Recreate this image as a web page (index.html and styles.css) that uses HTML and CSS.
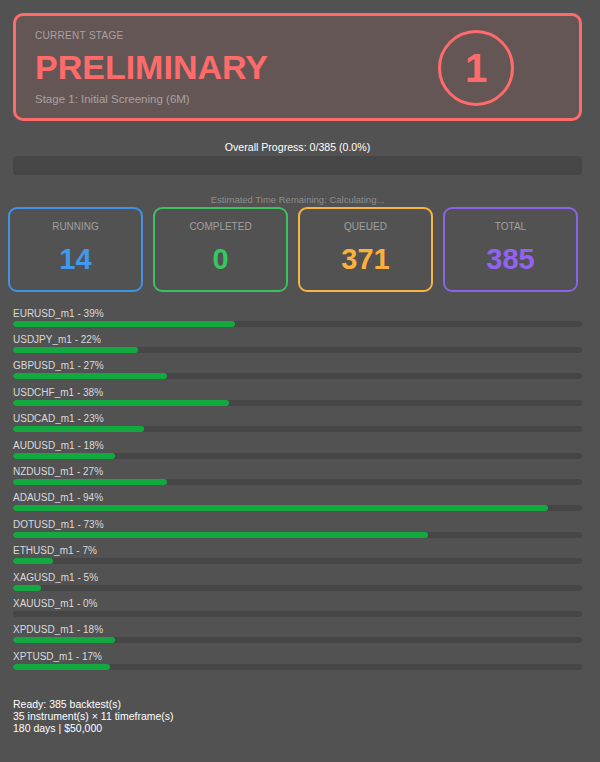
FILE: index.html
```html
<!DOCTYPE html>
<html>
<head>
<meta charset="utf-8">
<link rel="stylesheet" href="styles.css">
</head>
<body>
<div class="page">
  <div class="stage-card">
    <div class="stage-info">
      <div class="stage-label">CURRENT STAGE</div>
      <div class="stage-name">PRELIMINARY</div>
      <div class="stage-desc">Stage 1: Initial Screening (6M)</div>
    </div>
    <div class="stage-circle">1</div>
  </div>

  <div class="overall-text">Overall Progress: 0/385 (0.0%)</div>
  <div class="overall-bar"></div>
  <div class="eta">Estimated Time Remaining: Calculating...</div>

  <div class="stats">
    <div class="stat running"><div class="stat-label">RUNNING</div><div class="stat-value">14</div></div>
    <div class="stat completed"><div class="stat-label">COMPLETED</div><div class="stat-value">0</div></div>
    <div class="stat queued"><div class="stat-label">QUEUED</div><div class="stat-value">371</div></div>
    <div class="stat total"><div class="stat-label">TOTAL</div><div class="stat-value">385</div></div>
  </div>

  <div class="jobs">
    <div class="job"><div class="job-label">EURUSD_m1 - 39%</div><div class="track"><div class="fill" style="width:39%"></div></div></div>
    <div class="job"><div class="job-label">USDJPY_m1 - 22%</div><div class="track"><div class="fill" style="width:22%"></div></div></div>
    <div class="job"><div class="job-label">GBPUSD_m1 - 27%</div><div class="track"><div class="fill" style="width:27%"></div></div></div>
    <div class="job"><div class="job-label">USDCHF_m1 - 38%</div><div class="track"><div class="fill" style="width:38%"></div></div></div>
    <div class="job"><div class="job-label">USDCAD_m1 - 23%</div><div class="track"><div class="fill" style="width:23%"></div></div></div>
    <div class="job"><div class="job-label">AUDUSD_m1 - 18%</div><div class="track"><div class="fill" style="width:18%"></div></div></div>
    <div class="job"><div class="job-label">NZDUSD_m1 - 27%</div><div class="track"><div class="fill" style="width:27%"></div></div></div>
    <div class="job"><div class="job-label">ADAUSD_m1 - 94%</div><div class="track"><div class="fill" style="width:94%"></div></div></div>
    <div class="job"><div class="job-label">DOTUSD_m1 - 73%</div><div class="track"><div class="fill" style="width:73%"></div></div></div>
    <div class="job"><div class="job-label">ETHUSD_m1 - 7%</div><div class="track"><div class="fill" style="width:7%"></div></div></div>
    <div class="job"><div class="job-label">XAGUSD_m1 - 5%</div><div class="track"><div class="fill" style="width:5%"></div></div></div>
    <div class="job"><div class="job-label">XAUUSD_m1 - 0%</div><div class="track"><div class="fill" style="width:0%"></div></div></div>
    <div class="job"><div class="job-label">XPDUSD_m1 - 18%</div><div class="track"><div class="fill" style="width:18%"></div></div></div>
    <div class="job"><div class="job-label">XPTUSD_m1 - 17%</div><div class="track"><div class="fill" style="width:17%"></div></div></div>
  </div>

  <div class="summary">
    <div>Ready: 385 backtest(s)</div>
    <div>35 instrument(s) × 11 timeframe(s)</div>
    <div>180 days | $50,000</div>
  </div>
</div>
</body>
</html>
```

FILE: styles.css
```css
html, body {
  margin: 0;
  padding: 0;
  background: #525252;
}
body {
  font-family: "Liberation Sans", Arial, sans-serif;
  color: #ffffff;
}
.page {
  padding: 13px 18px 20px 13px;
  width: 569px;
}
.stage-card {
  box-sizing: border-box;
  height: 108px;
  border: 3px solid #ff6b6b;
  border-radius: 10px;
  background: #655656;
  display: flex;
  align-items: center;
  justify-content: space-between;
  padding: 0 65px 0 19px;
}
.stage-info {
  display: flex;
  flex-direction: column;
  margin-top: 2px;
}
.stage-label {
  font-size: 10px;
  line-height: 12px;
  letter-spacing: 0.3px;
  color: #a9a1a1;
}
.stage-name {
  font-size: 34px;
  line-height: 40px;
  font-weight: bold;
  color: #ff6b6b;
  margin-top: 5px;
}
.stage-desc {
  font-size: 11.5px;
  line-height: 14px;
  color: #a9a1a1;
  margin-top: 5px;
}
.stage-circle {
  box-sizing: border-box;
  width: 76px;
  height: 76px;
  border: 3px solid #ff6b6b;
  border-radius: 50%;
  display: flex;
  align-items: center;
  justify-content: center;
  font-size: 40px;
  font-weight: bold;
  color: #ff6b6b;
  margin-top: 2px;
}
.overall-text {
  margin-top: 20px;
  text-align: center;
  font-size: 10.6px;
  line-height: 13px;
  color: #ffffff;
}
.overall-bar {
  margin-top: 2px;
  height: 19px;
  background: #464646;
  border-radius: 4px;
}
.eta {
  margin-top: 19px;
  text-align: center;
  font-size: 9.5px;
  line-height: 12px;
  color: #8c8c8c;
}
.stats {
  margin-top: 1px;
  margin-left: -5px;
  margin-right: 4px;
  display: grid;
  grid-template-columns: repeat(4, 1fr);
  gap: 10px;
}
.stat {
  box-sizing: border-box;
  height: 85px;
  border: 2px solid;
  border-radius: 9px;
  padding-top: 12px;
  text-align: center;
}
.stat-label {
  font-size: 10px;
  line-height: 12px;
  color: #a0a0a0;
}
.stat-value {
  margin-top: 9px;
  font-size: 29px;
  line-height: 34px;
  font-weight: bold;
}
.running { border-color: #4391e4; }
.running .stat-value { color: #4199ee; }
.completed { border-color: #3cc062; }
.completed .stat-value { color: #36c860; }
.queued { border-color: #f6b445; }
.queued .stat-value { color: #fbb13c; }
.total { border-color: #8b63e6; }
.total .stat-value { color: #9263f2; }
.jobs {
  margin-top: 15.7px;
  display: flex;
  flex-direction: column;
}
.job {
  padding-bottom: 7.4px;
}
.job-label {
  font-size: 10px;
  line-height: 12px;
  color: #dadada;
}
.track {
  margin-top: 1px;
  height: 6px;
  background: #464646;
  border-radius: 3px;
  overflow: hidden;
}
.fill {
  height: 100%;
  background: #12aa40;
  border-radius: 3px;
}
.summary {
  margin-top: 20.6px;
  font-size: 10.5px;
  line-height: 12.3px;
  color: #ffffff;
}
```
